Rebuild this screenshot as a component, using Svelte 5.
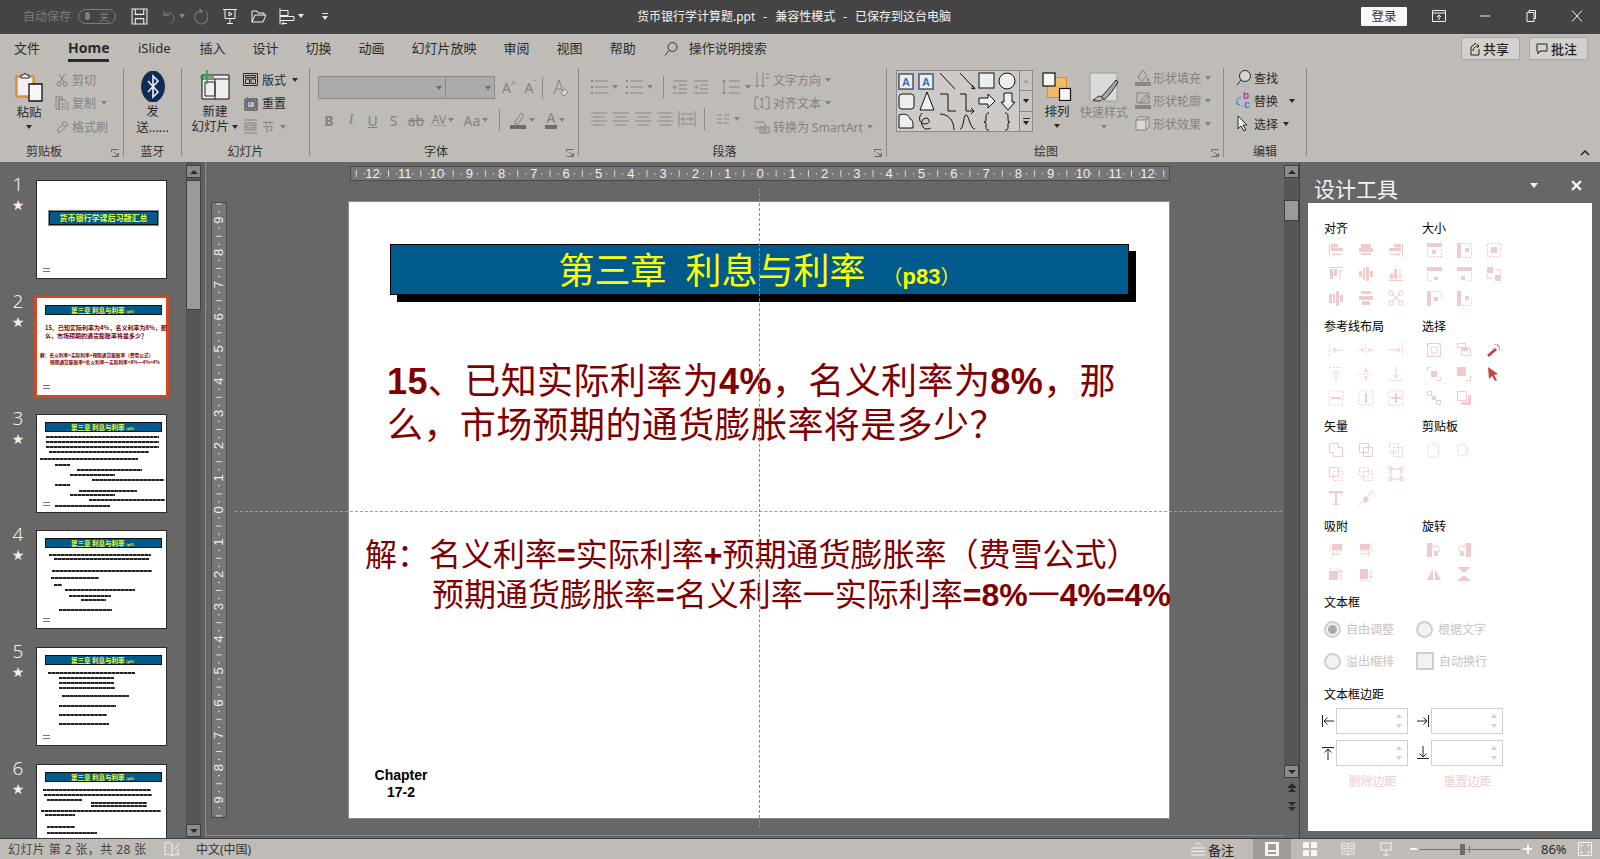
<script>
  const tabs = ['文件', 'Home', 'iSlide', '插入', '设计', '切换', '动画', '幻灯片放映', '审阅', '视图', '帮助'];
  const hTicks = [], vTicks = [];
  for (let q = -50; q <= 50; q++) {
    if (q % 4 === 0) continue;
    hTicks.push({ p: 409 + q * 8.075, big: q % 2 === 0 });
    if (Math.abs(q) <= 38) vTicks.push({ p: 307 + q * 8.05, big: q % 2 === 0 });
  }
  const hNums = Array.from({ length: 25 }, (_, i) => i - 12);
  const vNums = Array.from({ length: 19 }, (_, i) => i - 9);

  const thumbs = [
    { n: 1, title: '货币银行学课后习题汇总', kind: 'cover', lines: [] },
    { n: 2, title: '第三章 利息与利率', kind: 'cur', lines: [] },
    { n: 3, title: '第三章 利息与利率', kind: 'lines', lines: [
      [9, 113, 4], [9, 113, 3], [9, 113, 3], [12, 100, 3], [3, 98, 5], [18, 15, 4], [40, 65, 3], [33, 45, 3], [55, 72, 3],
      [18, 15, 3], [42, 58, 4], [33, 45, 2], [52, 76, 3], [18, 55, 4] ] },
    { n: 4, title: '第三章 利息与利率', kind: 'lines', lines: [
      [12, 102, 6], [17, 95, 2], [15, 100, 10], [14, 48, 5], [17, 8, 5], [28, 70, 3], [32, 42, 4], [44, 25, 2], [22, 53, 8] ] },
    { n: 5, title: '第三章 利息与利率', kind: 'lines', lines: [
      [11, 87, 7], [22, 55, 3], [22, 55, 3], [22, 56, 3], [25, 67, 6], [22, 57, 8], [22, 48, 7], [22, 50, 7] ] },
    { n: 6, title: '第三章 利息与利率', kind: 'lines', lines: [
      [6, 108, 7], [7, 108, 3], [10, 35, 3], [54, 56, 1], [54, 56, 1], [4, 120, 3], [8, 30, 2], [10, 28, 10], [10, 50, 4] ] }
  ];

  const P = {
    a1: { s: 'M1.5 1v14M14 12.5H4M6.5 10.5l-2 2 2 2', f: 'M3 2h7v3.5H3zM3 6h12v3H3z' },
    a2: { f: 'M3 2h10v4H3zM1 6h14v4H1zM3 11h10v2H3z' },
    a3: { s: 'M14.5 1v14M2 12.5h10M9.5 10.5l2 2-2 2', f: 'M6 2h7v3.5H6zM1 6h12v3H1z' },
    a4: { s: 'M1 1.5h14M12 14V4M10 6l2-2 2 2', f: 'M2 3h3v10H2zM6 3h3v7H6z' },
    a5: { f: 'M1 5h3v6H1zM5 2h2v12H5zM8 1h3v14H8zM12 5h3v6h-3z' },
    a6: { s: 'M1 14.5h14M12 3v9M10 10l2 2 2-2', f: 'M2 8h3v5H2zM6 3h3v10H6z' },
    a7: { f: 'M1 4h3v9H1zM5 4h2v9H5zM8 1h3v15H8zM12 5h3v7h-3z' },
    a8: { f: 'M3 1h10v3H3zM1 6h14v4H1zM4 11h8v4H4z' },
    a9: { s: 'M4 4l8 8M12 4l-8 8M1 1h4v4H1zM11 1h4v4h-4zM1 11h4v4H1zM11 11h4v4h-4z' },
    b1: { f: 'M1 1h15v4H1zM6 8h4v4H6z', d: 'M1.5 6v8.5h14V6' },
    b2: { f: 'M1 1h4v15H1zM9 6h4v4H9z', d: 'M6 1.5h9.5v14H6' },
    b3: { d: 'M1.5 1.5h13v13h-13z', f: 'M5 5h6v6H5z' },
    b4: { f: 'M1 1h15v4H1zM8 11h4v3H8z', d: 'M1.5 6v8.5h5' },
    b5: { f: 'M1 1h15v4H1zM5 10h4v4H5z', d: 'M15.5 6v8.5h-4' },
    b6: { f: 'M1 1h6v6H1zM9 9h6v6H9z', s: 'M10 4h5v4M6 12H1V8' },
    b7: { f: 'M1 1h4v15H1zM8 7h4v4H8z', d: 'M7 1.5h8.5v8' },
    b8: { f: 'M1 1h4v15H1zM9 6h4v4H9z', d: 'M6 15.5h9.5V9' },
    c1: { d: 'M1.5 1v14', s: 'M15 8H5M8 5.5 5 8l3 2.5' },
    c2: { d: 'M8 1v14', s: 'M1 8h5M4 6l2 2-2 2M15 8h-5M12 6l-2 2 2 2' },
    c3: { d: 'M14.5 1v14', s: 'M1 8h11M9 5.5 12 8l-3 2.5' },
    c4: { d: 'M1 1.5h14', s: 'M8 15V5M5.5 8 8 5l2.5 3' },
    c5: { d: 'M1 8h14', s: 'M8 1v5M6 4l2 2 2-2M8 15v-5M6 12l2-2 2 2' },
    c6: { d: 'M1 14.5h14', s: 'M8 1v11M5.5 9 8 12l2.5-3' },
    c7: { d: 'M1 1h14v14H1z', f: 'M3 7h10v2H3z' },
    c8: { d: 'M1 1h14v14H1z', f: 'M7 3h2v10H7z' },
    c9: { d: 'M1 1h14v14H1z', f: 'M7 3h2v10H7zM3 7h10v2H3z' },
    d1: { s: 'M1.5 1.5h9v4h4v9h-9v-4h-4z' },
    d2: { s: 'M1.5 1.5h9v9h-9zM5.5 5.5h9v9h-9z' },
    d3: { d: 'M1.5 1.5h9v9h-9zM5.5 5.5h9v9h-9z' },
    d4: { s: 'M1.5 1.5h9v9h-9z', d: 'M5.5 5.5h9v9h-9z' },
    d5: { d: 'M1.5 1.5h9v9h-9zM5.5 5.5h9v9h-9z' },
    d6: { s: 'M3 3h10v10H3zM1 1h3v3H1zM12 1h3v3h-3zM1 12h3v3H1zM12 12h3v3h-3z' },
    d7: { f: 'M1 1h14v3h-1l-1-1H9v10l2 1v1H5v-1l2-1V3H3L2 4H1z' },
    d8: { s: 'M1 15l5-5M10 6l5-5', f: 'M5 8l3-2 3 2-1 3-3 2-2-2z' },
    e1: { d: 'M2 1v8h12', f: 'M4 2h10v6H4z', s: 'M13 12H4M6 10l-2 2 2 2' },
    e2: { d: 'M14 1v8H2', f: 'M2 2h10v6H2z', s: 'M2 12h10M10 10l2 2-2 2' },
    e3: { d: 'M2 3h9v4', f: 'M1 5h9v9H1z', s: 'M13 14V4M11 6l2-2 2 2' },
    e4: { d: 'M2 15h12', f: 'M2 3h8v10H2z', s: 'M13 3v9M11 10l2 2 2-2' },
    h1: { f: 'M1 1h5v14H1zM8 9h4v5H8z', s: 'M8 6c0-3 5-3 5 1v3M8 2 6 4l2 2' },
    h2: { f: 'M10 1h5v14h-5zM4 9h4v5H4z', s: 'M8 6c0-3-5-3-5 1v3M8 2l2 2-2 2' },
    h3: { f: 'M7 3v11H1zM9 3v11h6z' },
    h4: { f: 'M2 1h12v1L8 7 2 2zM8 9l6 5v1H2v-1z' },
    k1: { s: 'M1.5 1.5h13v13h-13zM5 5h6v6H5z', f: 'M1 1h2v2H1zM13 1h2v2h-2zM1 13h2v2H1zM13 13h2v2h-2z' },
    k2: { s: 'M1.5 1.5h8v3M5.5 6.5h9v7h-9zM1.5 1.5v4h4', f: 'M6 5h6v4H6z' },
    k4: { s: 'M1.5 5V1.5H5M14.5 11v3.5H11', f: 'M5 5h6v6H5z' },
    k5: { s: 'M10 14.5h4.5V10', f: 'M1 1h9v9H1z' },
    k7: { s: 'M1.5 1.5h4v4h-4zM10.5 10.5h4v4h-4z', f: 'M6 6h4v4H6z' },
    k8: { s: 'M1.5 1.5h9v9h-9z', f: 'M12 5h3v10H5v-3h7z' },
    m1: { s: 'M4 3h6a2 2 0 0 1 2 2v8a2 2 0 0 1-2 2H4a2 2 0 0 1-2-2V5a2 2 0 0 1 2-2zM6 1h4a3 3 0 0 1 3 3v8' },
    m2: { s: 'M2 3h6l2 2v8H2zM6 1h2l4 4v8' }
  };
  const S1 = [['a1','a2','a3'],['a4','a5','a6'],['a7','a8','a9']];
  const S2 = [['b1','b2','b3'],['b4','b5','b6'],['b7','b8']];
  const S3 = [['c1','c2','c3'],['c4','c5','c6'],['c7','c8','c9']];
  const S4 = [['k1','k2','wand'],['k4','k5','cursor'],['k7','k8']];
  const S5 = [['d1','d2','d3'],['d4','d5','d6'],['d7','d8']];
  const S6 = [['m1','m2']];
  const S7 = [['e1','e2'],['e3','e4']];
  const S8 = [['h1','h2'],['h3','h4']];
  const sections = [
    ['对齐', S1, '大小', S2], ['参考线布局', S3, '选择', S4], ['矢量', S5, '剪贴板', S6], ['吸附', S7, '旋转', S8]
  ];
</script>

{#snippet pic(name)}
  <svg class="pi" class:soft={name === 'm1' || name === 'm2'} viewBox="0 0 16 16" width="16" height="16">
    {#if name === 'wand'}
      <path class="rf" d="M1 13l8-7 2 2-8 7z" /><path class="rs" d="M11 2l1 2M14 5l-2 0M9 2v1M14 8l-1-1" />
    {:else if name === 'cursor'}
      <path class="rf" d="M2 1l10 7-4 1 3 5-2 1-3-5-3 3z" />
    {:else}
      {#if P[name].f}<path class="ff" d={P[name].f} />{/if}
      {#if P[name].s}<path class="ss" d={P[name].s} />{/if}
      {#if P[name].d}<path class="dd" d={P[name].d} />{/if}
    {/if}
  </svg>
{/snippet}

{#snippet pgrid(rows)}
  <div class="pgrid">
    {#each rows as r}
      <div class="prow">{#each r as n}<span class="pcell">{@render pic(n)}</span>{/each}</div>
    {/each}
  </div>
{/snippet}

{#snippet spin(dir)}
  <div class="marg-item">
    <svg class="marg-ic" viewBox="0 0 14 14" width="14" height="14">
      {#if dir === 'l'}<path d="M1.5 1v12M13 7H3M6.5 3.5 3 7l3.5 3.5" />
      {:else if dir === 'r'}<path d="M12.5 1v12M1 7h10M7.5 3.5 11 7l-3.5 3.5" />
      {:else if dir === 't'}<path d="M1 1.5h12M7 14V3M3.5 6.5 7 3l3.5 3.5" />
      {:else}<path d="M1 12.5h12M7 0v11M3.5 7.5 7 11l3.5-3.5" />{/if}
    </svg>
    <div class="spin"><i class="sup"></i><i class="sdn"></i></div>
  </div>
{/snippet}

{#snippet launcher()}
  <svg class="lau" viewBox="0 0 8 8" width="8" height="8"><path d="M.5 3V.5H7.500M.5 7.500h7V4M3 3l4 4M7 4.500V7H4.500" /></svg>
{/snippet}

<div class="app">
  <header class="titlebar">
    <div class="tb-left">
      <span class="autosave">自动保存</span>
      <span class="toggle"><i></i><b>关</b></span>
      <svg class="qa save" viewBox="0 0 16 16" width="17" height="17"><path d="M1 1h14v14H1zM4 1v5h8V1M4 15v-5h8v5" /></svg>
      <svg class="qa dim undo" viewBox="0 0 16 16" width="16" height="17"><path d="M3 2v5h5M3 7c3-4 10-3 10 3 0 2-1 4-3 5" /></svg>
      <i class="car dimc"></i>
      <svg class="qa dim redo" viewBox="0 0 16 16" width="17" height="17"><path d="M6 1l3 2-3 2M9 3C4 2 1 6 2 10c1 3 3 5 6 5s6-3 6-7c0-2-1-4-2-5" /></svg>
      <svg class="qa pres" viewBox="0 0 16 16" width="16" height="17"><path d="M1 1h14M3 1v9h10V1M8 10v5M5 15h6M7 3.500v4l3-2z" /></svg>
      <svg class="qa open" viewBox="0 0 16 16" width="16" height="16"><path d="M1 3h5l1 2h6v2M1 14V3M1 14h11l3-7H4z" /></svg>
      <svg class="qa alignq" viewBox="0 0 16 16" width="16" height="17"><path d="M1 0v16M1 2h8v5H1M1 8h14v4H1M8 15H3M5 13l-2 2 2 2" /></svg>
      <i class="car whitec"></i>
      <span class="more"><i></i><i class="car whitec"></i></span>
    </div>
    <div class="doc">货币银行学计算题.ppt<span class="dash">-</span>兼容性模式<span class="dash">-</span>已保存到这台电脑</div>
    <div class="tb-right">
      <button class="login">登录</button>
      <svg class="win" viewBox="0 0 14 14" width="14" height="14"><path d="M.5 1.500h13v11H.5zM.5 4h13M7 11V6M5 8l2-2 2 2" /></svg>
      <svg class="win" viewBox="0 0 14 14" width="14" height="14"><path d="M2 7h10" /></svg>
      <svg class="win" viewBox="0 0 14 14" width="14" height="14"><path d="M3 3.500h7v9H3zM5 3.500V1.500h6.500v8H10" /></svg>
      <svg class="win" viewBox="0 0 14 14" width="14" height="14"><path d="M2 1.500l10 11M12 1.500l-10 11" /></svg>
    </div>
  </header>

  <nav class="tabs">
    {#each tabs as t}<span class="tab" class:active={t === 'Home'}>{t}</span>{/each}
    <svg class="searchic" viewBox="0 0 14 14" width="14" height="15"><circle cx="8.500" cy="5.500" r="4.500" /><path d="M5 9 1 14" /></svg>
    <span class="tell">操作说明搜索</span>
    <div class="share">
      <button><svg viewBox="0 0 12 14" width="12" height="14"><path d="M8 1 3 5v8h8V7M5 9c0-3 2-5 6-5M9 2l2 2-2 2" /></svg>共享</button>
      <button><svg viewBox="0 0 12 14" width="12" height="14"><path d="M1 2h10v7H4l-2 3V9H1z" /></svg>批注</button>
    </div>
  </nav>

  <section class="ribbon">
    <div class="rg g-clip">
      <div class="rb">
        <div class="big">
          <svg viewBox="0 0 28 30" width="28" height="30">
            <path d="M1 4h18v21H1z" fill="#eba95c" stroke="#c87a2a" />
            <path d="M3 6h14v17H3z" fill="#f2f0ee" stroke="none" />
            <path d="M6 5V3h2.500L10 1l1.500 2H14v3H6z" fill="#f4f2f0" stroke="#222" />
            <path d="M14 12h13v17H14z" fill="#f7f6f5" stroke="#111" stroke-width="1.300" />
          </svg>
          <span class="bl on">粘贴</span><i class="car"></i>
        </div>
        <div class="list off">
          <div class="li"><svg viewBox="0 0 14 14" width="14" height="14"><path d="M4 1l5 8M10 1 5 9" /><circle cx="4" cy="11" r="2" /><circle cx="10" cy="11" r="2" /></svg>剪切</div>
          <div class="li"><svg viewBox="0 0 14 14" width="14" height="14"><path d="M1 1h6l1 2H4v10H1zM4 4h6l3 3v7H4zM6 8h5M6 11h5" /></svg>复制<i class="car gap"></i></div>
          <div class="li"><svg viewBox="0 0 14 14" width="14" height="14"><path d="M9 1l4 4-3 2-3-3zM7 5l-5 5 2 3 6-5" /></svg>格式刷</div>
        </div>
      </div>
      <div class="gl">剪贴板{@render launcher()}</div>
    </div>

    <div class="rg g-bt">
      <div class="rb col">
        <svg class="bt" viewBox="0 0 24 31" width="24" height="31"><ellipse cx="12" cy="15.500" rx="11.500" ry="15.500" fill="#0c2d5c" /><path d="M7 10l10 11-5 5V5l5 5L7 21" fill="none" stroke="#e8e8e8" stroke-width="1.700" /></svg>
        <span class="bl on btl">发</span><span class="bl on">送......</span>
      </div>
      <div class="gl">蓝牙</div>
    </div>

    <div class="rg g-slide">
      <div class="rb">
        <div class="big wide">
          <svg viewBox="0 0 32 30" width="32" height="30">
            <path d="M3 5h27v24H3z" fill="#f0eeec" stroke="#111" />
            <path d="M3 9h27M16 9v20M6 12h10v14H6z" fill="none" stroke="#222" />
            <path d="M8 0v14M1 7h14" stroke="#2fa04d" stroke-width="1.600" fill="none" />
          </svg>
          <span class="bl on">新建</span>
          <span class="bl on">幻灯片 <i class="car inl"></i></span>
        </div>
        <div class="list on2">
          <div class="li"><svg viewBox="0 0 15 15" width="15" height="15"><path d="M.5 1.500h14v12H.5zM2.500 3.500h10v2h-10zM2.500 7h4v4.500h-4zM8 7h4.500v4.500H8z" /></svg>版式 <i class="car"></i></div>
          <div class="li"><svg viewBox="0 0 15 15" width="15" height="15"><path d="M2 3h12v11H2z" /><path d="M4 5h8v7H4z" /><path class="blue" d="M5 1 2 4l3 3M2 4h5v5" /></svg>重置</div>
          <div class="li off2"><svg viewBox="0 0 15 15" width="15" height="15"><path d="M1 1h13M1 14h13M2 4h11v7H2zM4 6h7v3H4z" /></svg>节 <i class="car"></i></div>
        </div>
      </div>
      <div class="gl">幻灯片</div>
    </div>

    <div class="rg g-font">
      <div class="rb col2">
        <div class="frow r1">
          <div class="combo w1"><i class="car"></i></div><div class="combo w2"><i class="car"></i></div>
          <span class="ft aa">A<sup>^</sup></span><span class="ft ab">A<sup>ˇ</sup></span>
          <span class="vsep h20"></span>
          <svg class="clear" viewBox="0 0 18 20" width="18" height="20"><path d="M4 16 9 2l5 14M6 11h6" /><path d="m11 15 4-4 3 3-4 4z" fill="#d8d6d4" /></svg>
        </div>
        <div class="frow r2">
          <span class="fb c22 b">B</span><span class="fb c22 it">I</span><span class="fb c21 ul">U</span><span class="fb c21 bl2">S</span>
          <span class="fb c24 strike">ab</span>
          <span class="fb c30 av"><em>AV</em><i class="car"></i></span>
          <span class="fb c36">Aa <i class="car"></i></span>
          <span class="vsep h20"></span>
          <span class="fb c30 pen"><svg viewBox="0 0 16 18" width="16" height="18"><path d="m5 11 6-9 3 2-6 9H5z" /><rect x="0" y="14" width="16" height="4" fill="#6f6d6b" stroke="none" /></svg><i class="car"></i></span>
          <span class="fb c36 cola"><span class="und">A</span><i class="car"></i></span>
        </div>
      </div>
      <div class="gl">字体{@render launcher()}</div>
    </div>

    <div class="rg g-para">
      <div class="rb">
        <div class="pleft">
          <div class="frow pr1">
            <svg class="pg" viewBox="0 0 18 18" width="18" height="18"><path d="M5 3h13M5 9h13M5 15h13" /><path class="d" d="M1 2h2v2H1zM1 8h2v2H1zM1 14h2v2H1z" /></svg><i class="car"></i>
            <svg class="pg ml" viewBox="0 0 18 18" width="18" height="18"><path d="M5 3h13M5 9h13M5 15h13" /><path class="d" d="M1 2h2v2H1zM1 8h2v2H1zM1 14h2v2H1z" /></svg><i class="car"></i>
            <span class="vsep h20 m8"></span>
            <svg class="pg" viewBox="0 0 16 18" width="16" height="18"><path d="M1 3h14M7 7h8M7 11h8M1 15h14M5 9H1m2-2-2 2 2 2" /></svg>
            <svg class="pg ml5" viewBox="0 0 16 18" width="16" height="18"><path d="M1 3h14M7 7h8M7 11h8M1 15h14M1 9h4M3 7l2 2-2 2" /></svg>
            <svg class="pg ml12" viewBox="0 0 20 18" width="20" height="18"><path d="M8 3h11M8 9h11M8 15h11M3 2v14M1 4l2-2 2 2M1 14l2 2 2-2" /></svg><i class="car"></i>
          </div>
          <div class="frow pr2">
            {#each [0, 1, 2, 3] as k}<svg class="pg al" viewBox="0 0 18 16" width="18" height="16"><path d="M1 2h16M3 6h12M1 10h16M3 14h12" /></svg>{/each}
            <svg class="pg al" viewBox="0 0 18 18" width="18" height="18"><path d="M1 1v16M17 1v16M3 4h12M3 14h12M3 9h12M6 7 3 9l3 2M12 7l3 2-3 2" /></svg>
            <span class="vsep h20 m4"></span>
            <svg class="pg ml5" viewBox="0 0 14 14" width="14" height="14"><path d="M1 3h5M1 7h5M1 11h5M8 3h5M8 7h5M8 11h5" /></svg><i class="car"></i>
          </div>
        </div>
        <div class="list off pright">
          <div class="li"><svg viewBox="0 0 16 16" width="16" height="16"><path d="M3 1v14M1 13l2 2 2-2M9 1v14M7 13l2 2 2-2M12 2h3M12 6h3" /></svg>文字方向<i class="car"></i></div>
          <div class="li"><svg viewBox="0 0 16 16" width="16" height="16"><path d="M1 2v12M15 2v12M1 2h4M11 2h4M1 14h4M11 14h4M8 3v10M6 5l2-2 2 2M6 11l2 2 2-2" /></svg>对齐文本<i class="car"></i></div>
          <div class="li"><svg viewBox="0 0 16 16" width="16" height="16"><path d="M1 3h8l3 3-3 3H1M6 8h9v6H6zM8 10h5M8 12h5" /></svg>转换为 SmartArt<i class="car"></i></div>
        </div>
      </div>
      <div class="gl">段落{@render launcher()}</div>
    </div>

    <div class="rg g-draw">
      <div class="rb">
        <div class="gallery">
          <svg class="shapes" viewBox="0 0 122 60" width="122" height="60">
            <g class="s">
              <rect x="2" y="3" width="14" height="15" />
              <text x="9" y="15" class="gt">A</text>
              <rect x="22" y="3" width="14" height="15" />
              <text x="29" y="15" class="gt">A</text>
              <path class="nf" d="M43 2l15 16M63 2l15 16M75 14l3 4-4-1" />
              <rect x="82" y="2" width="15" height="15" />
              <circle cx="110" cy="10" r="8" />
              <rect x="2" y="23" width="15" height="15" rx="3" />
              <path d="M30 21l7 18H23z" />
              <path class="nf" d="M43 23h8v17h8M63 23h6v17h8M74 37l3 3-3 3" />
              <path d="M82 27h9v-4l7 7-7 7v-4h-9zM107 22h8v9h3l-7 8-7-8h3z" />
              <path d="M2 44c7-2 10 0 11 4 3 1 3 3 3 9H2z" />
              <path class="nf" d="M25 42c-4 4-3 10 2 11 5 0 7-3 3-6-6 0-6 6-4 9s6 2 8 1" />
              <path class="nf" d="M43 43c7 0 14 5 14 16M63 58c4 0 3-14 6-14s4 14 9 14" />
              <path class="nf" d="M92 42c-3 0-3 2-3 5s0 4-2 4c2 0 2 1 2 4s0 4 3 4M108 42c3 0 3 2 3 5s0 4 2 4c-2 0-2 1-2 4s0 4-3 4" />
            </g>
            <g class="hand">
              <path d="M1 2h2v2H1zM15 2h2v2h-2zM1 17h2v2H1zM15 17h2v2h-2zM21 2h2v2h-2zM35 2h2v2h-2zM21 17h2v2h-2zM35 17h2v2h-2z" />
            </g>
          </svg>
          <div class="gscroll">
            <span><i class="up"></i></span><span><i class="dn"></i></span><span class="exp"><b></b><i class="dn"></i></span>
          </div>
        </div>
        <div class="big arrange">
          <svg viewBox="0 0 30 29" width="30" height="29">
            <rect x="5.500" y="5.500" width="19" height="20" fill="#efbb68" stroke="#de8a34" />
            <rect x="1" y="1" width="12" height="13" fill="#f7f6f5" stroke="#111" stroke-width="1.200" />
            <rect x="17.500" y="16.500" width="11" height="12" fill="#f7f6f5" stroke="#111" stroke-width="1.200" />
          </svg>
          <span class="bl on">排列</span><i class="car"></i>
        </div>
        <div class="big quick">
          <svg viewBox="0 0 30 30" width="30" height="30">
            <rect x="1" y="1" width="27" height="28" rx="1" fill="#dcdad8" stroke="#9c9a98" />
            <path d="M27 8C22 14 17 20 12 25l3 3c5-4 10-11 14-18z" fill="#a9a7a5" />
            <path d="M11 24c-3 0-4 3-7 4 4 2 9 1 10-2z" fill="#bfbdbb" />
          </svg>
          <span class="bl dimt">快速样式</span><i class="car dimi"></i>
        </div>
        <div class="list off fills">
          <div class="li"><svg viewBox="0 0 16 18" width="16" height="18"><path d="M8 1 3 8l4 4 5-5zM13 9c1 1 1 3 0 3s-1-2 0-3" /><rect x="0" y="13" width="16" height="4" fill="#8a8785" stroke="none" /></svg>形状填充<i class="car"></i></div>
          <div class="li"><svg viewBox="0 0 16 18" width="16" height="18"><path d="M2 1h12v10H2zM5 10l6-7 2 2-6 6H5z" /><rect x="0" y="13" width="16" height="4" fill="#8a8785" stroke="none" /></svg>形状轮廓<i class="car"></i></div>
          <div class="li"><svg viewBox="0 0 16 18" width="16" height="18"><path d="M1 5h10l3-3v10l-3 3H1zM1 5l3-3h10M11 5v10" fill="#dad8d6" /></svg>形状效果<i class="car"></i></div>
        </div>
      </div>
      <div class="gl">绘图{@render launcher()}</div>
    </div>

    <div class="rg g-edit">
      <div class="rb">
        <div class="list on3">
          <div class="li"><svg viewBox="0 0 16 18" width="16" height="18"><circle cx="10" cy="7" r="5.500" fill="#d8d6d4" /><path d="M6 11l-4 5" /></svg>查找</div>
          <div class="li"><svg viewBox="0 0 16 18" width="16" height="18"><path class="blue" d="M6 5C2 6 1 9 2 12l2-2M2 12l3 1M8 14h-1" /><text x="8" y="7" class="pb">b</text><text x="9" y="16" class="cb">c</text></svg>替换 <i class="car sp"></i></div>
          <div class="li"><svg viewBox="0 0 16 18" width="16" height="18"><path d="M3 1v13l3-3 3 5 2-1-3-5h4z" fill="#eee" /></svg>选择 <i class="car"></i></div>
        </div>
      </div>
      <div class="gl">编辑</div>
    </div>
    <svg class="collapse" viewBox="0 0 10 6" width="10" height="6"><path d="M1 5l4-4 4 4" /></svg>
  </section>

  <div class="work">
    <aside class="slides">
      <div class="thumbs">
        {#each thumbs as t}
          <div class="trow">
            <div class="tnum"><span>{t.n}</span><b>★</b></div>
            <div class="thumb" class:cur={t.kind === 'cur'}>
              {#if t.kind === 'cover'}
                <div class="ttitle cover">{t.title}</div>
              {:else}
                <div class="ttitle">{t.title}<small>（p83）</small></div>
              {/if}
              {#if t.kind === 'cur'}
                <div class="t2a">15、已知实际利率为4%，名义利率为8%，那<br />么，市场预期的通货膨胀率将是多少？</div>
                <div class="t2b">解：名义利率=实际利率+预期通货膨胀率（费雪公式）<br /><span>预期通货膨胀率=名义利率一实际利率=8%一4%=4%</span></div>
              {/if}
              {#each t.lines as l}
                <div class="tl" style:margin-left="{l[0]}px" style:width="{l[1]}px" style:margin-top="{l[2]}px"></div>
              {/each}
              {#if t.kind !== 'lines' || t.n < 6}<div class="tfoot"><i></i><i></i></div>{/if}
            </div>
          </div>
        {/each}
      </div>
      <div class="vscroll left">
        <span class="sb"><i class="up"></i></span>
        <span class="thumbbar"></span>
        <span class="sb bottom"><i class="dn"></i></span>
      </div>
      <div class="sliver"></div>
    </aside>

    <main class="edit">
      <svg class="hruler" viewBox="0 0 818 13" width="818" height="13">
        {#each hTicks as t}
          {#if t.big}<path class="tk" d="M{t.p} 3v7" />{:else}<path class="tk" d="M{t.p} 6v1.500" />{/if}
        {/each}
        {#each hNums as n}<text class="rn" x={409 + n * 32.3} y="11">{Math.abs(n)}</text>{/each}
      </svg>
      <svg class="vruler" viewBox="0 0 14 614" width="14" height="614">
        {#each vTicks as t}
          {#if t.big}<path class="tk" d="M4 {t.p}h6" />{:else}<path class="tk" d="M6 {t.p}h2" />{/if}
        {/each}
        {#each vNums as n}<text class="rn" transform="translate(11 {307 + n * 32.2}) rotate(-90)">{Math.abs(n)}</text>{/each}
      </svg>

      <article class="slide">
        <div class="stitle">第三章<span class="sgap"></span>利息与利率<span class="sgap2"></span><span class="sp83">（<b>p83</b>）</span></div>
        <div class="q">
          <div><b>15</b>、已知实际利率为<b>4%</b>，名义利率为<b>8%</b>，那</div>
          <div>么，市场预期的通货膨胀率将是多少？</div>
        </div>
        <div class="a">
          <div>解：名义利率<b>=</b>实际利率<b>+</b>预期通货膨胀率（费雪公式）</div>
          <div class="a2">预期通货膨胀率<b>=</b>名义利率一实际利率<b>=8%</b>一<b>4%=4%</b></div>
        </div>
        <div class="chapter">Chapter<br />17-2</div>
      </article>

      <div class="gh"></div>
      <div class="gv"></div>
    </main>

    <div class="vscroll right">
      <span class="sb"><i class="up"></i></span>
      <span class="trackgap"></span>
      <span class="thumbbar small"></span>
      <span class="trackfill"></span>
      <span class="sb"><i class="dn"></i></span>
      <div class="pager">
        <svg viewBox="0 0 10 10" width="10" height="10"><path d="M5 0l4 4H1zM5 5l4 4H1z" /><path d="M1 4.500h8" /></svg>
        <svg viewBox="0 0 10 10" width="10" height="10"><path d="M1 1h8L5 5zM1 6h8l-4 4z" /></svg>
      </div>
    </div>

    <aside class="panel">
      <div class="phead">
        <span>设计工具</span>
        <i class="ptri"></i>
        <svg class="px" viewBox="0 0 10 10" width="11" height="11"><path d="M1 1l8 8M9 1l-8 8" /></svg>
      </div>
      <div class="pbody">
        {#each sections as s}
          <div class="psec">
            <div class="pcol c1"><h4>{s[0]}</h4>{@render pgrid(s[1])}</div>
            <div class="pcol"><h4>{s[2]}</h4>{@render pgrid(s[3])}</div>
          </div>
        {/each}
        <h4 class="tbx">文本框</h4>
        <div class="opts">
          <label class="opt c1o"><i class="radio sel"></i>自由调整</label>
          <label class="opt"><i class="radio"></i>根据文字</label>
          <label class="opt c1o"><i class="radio"></i>溢出缩排</label>
          <label class="opt"><i class="check"></i>自动换行</label>
        </div>
        <h4 class="mg">文本框边距</h4>
        <div class="margins">
          {@render spin('l')}{@render spin('r')}{@render spin('t')}{@render spin('b')}
        </div>
        <div class="actions"><span>删除边距</span><span>重置边距</span></div>
      </div>
    </aside>
  </div>

  <footer class="status">
    <span class="st1">幻灯片 第 2 张，共 28 张</span>
    <svg class="stn" viewBox="0 0 16 16" width="16" height="16"><path d="M8 3C6 1 3 1 1 2v12c2-1 5-1 7 1 2-2 4-2 6-1V8M8 3v12M11 8l4-6" /></svg>
    <span class="st2">中文(中国)</span>
    <svg class="stnote" viewBox="0 0 16 14" width="16" height="14"><path d="M1 6h14M1 9.500h14M1 13h14M5 3.500l3-3 3 3" /></svg>
    <span class="st3">备注</span>
    <span class="vb act"><svg viewBox="0 0 14 14" width="14" height="14"><path d="M0 0h14v14H0z" fill="#f7f6f5" stroke="none" /><path d="M3 2h8v6H3zM3 10h8v2H3z" fill="#a09c98" stroke="none" /></svg></span>
    <span class="vb"><svg viewBox="0 0 14 14" width="14" height="14"><path d="M0 0h6v6H0zM8 0h6v6H8zM0 8h6v6H0zM8 8h6v6H8z" fill="#f7f6f5" stroke="none" /></svg></span>
    <span class="vb"><svg class="lv" viewBox="0 0 14 14" width="14" height="14"><path d="M7 2C5 1 3 1 1 1v11c2 0 4 0 6 1 2-1 4-1 6-1V1c-2 0-4 0-6 1zM7 2v11M2.500 4h3M2.500 6.500h3M2.500 9h3M8.500 4h3M8.500 6.500h3M8.500 9h3" /></svg></span>
    <span class="vb"><svg class="lv" viewBox="0 0 14 14" width="14" height="14"><path d="M1 1h12M2 1v7h10V1M7 8v5M4 13h6" /></svg></span>
    <div class="zoom">
      <b class="zm"></b>
      <div class="slider"><i class="sthumb"></i><i class="smid"></i></div>
      <b class="zp"></b>
      <span class="zv">86%</span>
      <svg class="fit" viewBox="0 0 14 14" width="14" height="14"><path d="M.5.5h13v13H.5zM3 5V3h2M9 3h2v2M3 9v2h2M11 9v2H9" /></svg>
    </div>
  </footer>
</div>

<style>
  :global(body) { margin: 0; background: #676767; overflow: hidden; }
  .app {
    width: 1600px; height: 859px; display: flex; flex-direction: column; overflow: hidden;
    font-family: "Noto Sans", "Noto Sans CJK SC", sans-serif; font-size: 12px; color: #2a2a2a; background: #676767;
  }
  svg { fill: none; stroke: currentColor; stroke-width: 1; flex: none; display: block; }
  i { font-style: normal; }
  button { font-family: inherit; }

  .car { display: inline-block; width: 0; height: 0; border: 3px solid transparent; border-top: 4px solid currentColor; border-bottom: 0; vertical-align: middle; }
  .whitec { color: #e6e6e6; }
  .dimc { color: #8a8a8a; }

  /* title bar */
  .titlebar { height: 34px; background: #444; display: flex; align-items: center; color: #f2f2f2; flex: none; padding-bottom: 2px; box-sizing: border-box; }
  .tb-left { width: 637px; display: flex; align-items: center; padding-left: 23px; box-sizing: border-box; flex: none; }
  .autosave { color: #7d7d7d; font-size: 12px; width: 55px; }
  .toggle { width: 38px; height: 15px; border: 1px solid #7d7d7d; border-radius: 9px; display: flex; align-items: center; justify-content: space-between; padding: 0 6px; box-sizing: border-box; color: #7d7d7d; font-size: 10px; }
  .toggle i { width: 5px; height: 8px; background: #7d7d7d; border-radius: 3px; }
  .toggle b { font-weight: 400; }
  .qa { color: #f2f2f2; }
  .qa.dim { color: #7d7d7d; }
  .save { margin-left: 15px; }
  .undo { margin-left: 13px; margin-right: 2px; }
  .redo { margin-left: 8px; }
  .pres { margin-left: 12px; }
  .open { margin-left: 13px; }
  .alignq { margin-left: 12px; margin-right: 3px; }
  .more { margin-left: 18px; display: flex; flex-direction: column; align-items: center; gap: 2px; }
  .more > i:first-child { width: 6px; height: 1px; background: #e6e6e6; }
  .doc { font-size: 12px; white-space: nowrap; color: #f4f4f4; }
  .dash { margin: 0 8px; }
  .tb-right { margin-left: auto; display: flex; align-items: center; height: 32px; }
  .login { width: 46px; height: 19px; background: #f8f8f8; border: 0; border-radius: 1px; padding: 0; font-size: 12.500px; line-height: 19px; color: #333; margin-right: 25px; }
  .win { color: #f0f0f0; margin-right: 32px; }
  .win:last-child { margin-right: 16px; }

  /* tabs */
  .tabs { height: 34px; background: #bfbbb7; display: flex; align-items: flex-start; flex: none; padding-left: 14px; font-size: 13px; box-sizing: border-box; }
  .tab { margin-right: 27px; line-height: 28px; height: 28px; color: #2b2b2b; white-space: nowrap; box-sizing: border-box; }
  .tab.active { font-weight: 700; font-size: 14px; border-bottom: 3px solid #2a2a2a; margin-left: 1px; margin-right: 28.500px; }
  .tab:nth-child(3) { margin-right: 29px; }
  .searchic { color: #333; margin: 7px 11px 0 1px; }
  .tell { color: #333; line-height: 28px; }
  .share { margin-left: auto; margin-right: 12px; margin-top: 3px; display: flex; gap: 9px; }
  .share button { height: 23px; padding: 0 6px; background: #d3d0cd; border: 1px solid #a9a6a3; border-radius: 2px; display: flex; align-items: center; gap: 3px; font-size: 13px; font-weight: 500; color: #222; box-sizing: border-box; width: 59px; }

  /* ribbon */
  .ribbon { height: 94px; background: #bfbbb7; display: flex; flex: none; position: relative; align-items: flex-start; }
  .rg { height: 89px; display: flex; flex-direction: column; border-right: 1px solid #8d8a87; box-sizing: border-box; flex: none; position: relative; }
  .rb { height: 75px; display: flex; }
  .rb.col { flex-direction: column; align-items: center; }
  .rb.col2 { flex-direction: column; }
  .gl { height: 14px; line-height: 18px; text-align: center; color: #333; font-size: 12px; white-space: nowrap; }
  .lau { position: absolute; right: 4px; bottom: 0; color: #6d6b69; }
  .g-clip { width: 124px; padding-left: 8px; }
  .g-bt { width: 58px; }
  .g-slide { width: 128px; padding-left: 7px; }
  .g-font { width: 269px; padding-left: 8px; }
  .g-para { width: 308px; }
  .g-draw { width: 337px; padding-left: 9px; }
  .g-edit { width: 83px; padding-left: 11px; }
  .g-clip .gl { margin-left: -8px; padding-right: 35px; }
  .g-slide .gl { margin-left: -7px; }
  .g-font .gl { margin-left: -8px; padding-right: 16px; }
  .g-para .gl { padding-right: 16px; }
  .g-draw .gl { margin-left: -9px; padding-right: 18px; }
  .g-edit .gl { margin-left: -11px; }

  .big { width: 42px; display: flex; flex-direction: column; align-items: center; padding-top: 4px; }
  .big.wide { width: 52px; padding-top: 2px; }
  .big svg { margin-bottom: 1px; }
  .big .bl { margin-top: 2px; }
  .big.wide svg { margin-bottom: 2px; }
  .big.wide .bl + .bl { margin-top: 0; }
  .big > .car { margin-top: 5px; }
  .bl { line-height: 15px; font-size: 12.500px; white-space: nowrap; }
  .on { color: #2a2a2a; }
  .car.inl { vertical-align: 2px; }
  .bt { margin-top: 3px; }
  .btl { margin-top: 2px; margin-bottom: 1px; }

  .list { display: flex; flex-direction: column; }
  .li { height: 23.500px; display: flex; align-items: center; white-space: nowrap; font-size: 12px; gap: 3px; }
  .list.off { color: #85827f; margin-left: 5px; }
  .list.on2 { color: #2a2a2a; margin-left: 2px; }
  .on2 .li { gap: 4px; }
  .on2 .car { margin-left: -2px; }
  .li.off2 { color: #85827f; }
  .blue { stroke: #3e78c8; }
  .car.gap { margin-left: 7px; }
  .list .car { margin-left: 2px; }

  .frow { display: flex; align-items: center; color: #85827f; }
  .r1 { height: 23px; margin-top: 8px; }
  .r2 { height: 24px; margin-top: 9px; }
  .combo { height: 23px; background: #adaba9; border: 1px solid #8d8a87; box-sizing: border-box; display: flex; align-items: center; justify-content: flex-end; padding-right: 3px; color: #6d6b69; }
  .w1 { width: 128px; }
  .w2 { width: 49px; border-left: 0; }
  .ft { font-size: 14px; line-height: 14px; }
  .ft sup { font-size: 8px; vertical-align: 6px; line-height: 0; }
  .aa { margin-left: 7px; }
  .ab { margin-left: 9px; }
  .vsep { width: 1px; background: #8d8a87; display: block; flex: none; }
  .h20 { height: 22px; margin: 0 7px 0 5px; }
  .clear { color: #85827f; }
  .fb { display: flex; align-items: center; justify-content: center; font-size: 14px; flex: none; gap: 2px; }
  .c22 { width: 22px; } .c21 { width: 21px; } .c24 { width: 24px; } .c30 { width: 30px; } .c36 { width: 36px; }
  .fb.b { font-weight: 700; }
  .fb.it { font-style: italic; font-family: "Liberation Serif", serif; }
  .fb.ul { text-decoration: underline; }
  .fb.strike { text-decoration: line-through; }
  .av em { font-style: normal; font-size: 12px; line-height: 12px; display: block; text-decoration: underline dotted; }
  .cola .und { border-bottom: 4px solid #6f6d6b; line-height: 14px; padding: 0 2px; }
  .pen { gap: 3px; }

  .pleft { width: 171px; padding-left: 11px; box-sizing: border-box; flex: none; }
  .pr1 { height: 22px; margin-top: 8px; }
  .pr2 { height: 22px; margin-top: 10px; gap: 4px; }
  .pg { color: #8a8785; }
  .pg .d { fill: #8a8785; stroke: none; }
  .pr1 .car { margin-left: 4px; }
  .ml { margin-left: 7px; }
  .ml5 { margin-left: 5px; }
  .ml12 { margin-left: 12px; }
  .m8 { margin: 0 8px 0 10px; }
  .m4 { margin: 0 2px 0 4px; }
  .pright { margin-left: 4px !important; }
  .pright .car { margin-left: 1px; }

  .gallery { width: 137px; height: 62px; margin-top: 2px; background: #cdcac7; border: 1px solid #8d8a87; box-sizing: border-box; display: flex; }
  .shapes { color: #111; flex: none; width: 122px; }
  .s { fill: #eee; stroke: #111; }
  .s .nf { fill: none; }
  .hand path { fill: #2d7bd6; stroke: none; }
  .gt { font: 700 11px "Liberation Sans", sans-serif; fill: #2d6fc4; stroke: none; text-anchor: middle; }
  .gscroll { flex: 1; display: flex; flex-direction: column; border-left: 1px solid #8d8a87; background: #c8c5c2; }
  .gscroll span { flex: 1; display: flex; flex-direction: column; align-items: center; justify-content: center; border-bottom: 1px solid #8d8a87; gap: 2px; }
  .gscroll span:last-child { border-bottom: 0; }
  .gscroll b { width: 7px; height: 1px; background: #333; display: block; }
  .gscroll .up { border: 3px solid transparent; border-bottom: 4px solid #a8a5a2; border-top: 0; }
  .gscroll .dn { border: 3px solid transparent; border-top: 4px solid #222; border-bottom: 0; }
  .arrange { width: 30px; margin-left: 9px; padding-top: 4px; }
  .quick { width: 48px; margin-left: 8px; }
  .dimt { color: #85827f; font-size: 12px; }
  .dimi { color: #85827f; }
  .fills { margin-left: 7px !important; margin-top: -2px; }
  .fills .li { gap: 2px; height: 23px; }
  .on3 { color: #2a2a2a; margin-top: -2px; }
  .on3 .li { gap: 3px; height: 23px; }
  .pb { font: 700 10px "Liberation Sans", sans-serif; fill: #a03fa0; stroke: none; }
  .cb { font: 700 10px "Liberation Sans", sans-serif; fill: #3e78c8; stroke: none; }
  .car.sp { margin-left: 8px; }
  .collapse { position: absolute; right: 10px; bottom: 6px; color: #222; stroke-width: 1.500; }

  /* work */
  .work { flex: 1; display: flex; min-height: 0; background: #676767; border-bottom: 1px solid #3d3d3d; }
  .slides { width: 205px; display: flex; flex: none; }
  .thumbs { width: 186px; flex: none; padding-top: 18px; box-sizing: border-box; overflow: hidden; }
  .trow { display: flex; height: 116.800px; }
  .tnum { width: 36px; display: flex; flex-direction: column; align-items: center; color: #efefef; margin-top: -8px; flex: none; }
  .tnum span { font-size: 19px; line-height: 25px; font-weight: 300; }
  .tnum b { font-size: 14px; line-height: 16px; font-weight: 400; font-family: "DejaVu Sans", sans-serif; }
  .thumb { width: 131px; height: 99px; background: #fff; border: 1px solid #2b2b2b; box-sizing: border-box; flex: none; overflow: hidden; position: relative; padding-top: 7px; }
  .thumb.cur { outline: 2px solid #d24726; border-color: #d24726; overflow: visible; }
  .ttitle { width: 115px; height: 8px; margin-left: 8px; background: #005b8c; border: 1px solid #111; color: #e8ff2a; font: 700 6.500px/8px "Noto Sans CJK SC", sans-serif; text-align: center; white-space: nowrap; }
  .ttitle small { font-size: 3px; }
  .ttitle.cover { margin: 23px 0 0 12px; width: 107px; height: 12px; font-size: 8px; line-height: 12px; box-shadow: 0 0 0 1px #888; }
  .t2a { color: #7f0000; font: 700 6px/8px "Noto Sans CJK SC", sans-serif; margin: 9px 0 0 8px; white-space: nowrap; }
  .t2b { color: #7f0000; font: 700 4.700px/7px "Noto Sans CJK SC", sans-serif; margin: 12px 0 0 3px; white-space: nowrap; }
  .t2b span { margin-left: 10px; }
  .tl { height: 2px; background: repeating-linear-gradient(90deg, #222 0 3px, #6a6a6a 3px 4px); filter: blur(.5px); }
  .tfoot { position: absolute; left: 6px; bottom: 6px; display: flex; flex-direction: column; gap: 2px; }
  .tfoot i { width: 7px; height: 1px; background: #777; display: block; }

  .vscroll { width: 15px; display: flex; flex-direction: column; align-items: stretch; box-sizing: border-box; flex: none; }
  .vscroll.left { background: #565656; padding-top: 3px; }
  .sb { height: 13px; background: #8b8b8b; border: 1px solid #3f3f3f; box-sizing: border-box; display: flex; align-items: center; justify-content: center; flex: none; }
  .sb .up { border: 4px solid transparent; border-bottom: 4px solid #2b2b2b; border-top: 0; }
  .sb .dn { border: 4px solid transparent; border-top: 4px solid #2b2b2b; border-bottom: 0; }
  .thumbbar { height: 130px; background: #9a9a9a; border: 1px solid #3f3f3f; box-sizing: border-box; margin-top: 2px; flex: none; }
  .sb.bottom { margin-top: auto; margin-bottom: 1px; }
  .sliver { width: 4px; background: #5f5f5f; flex: none; }

  .edit { flex: 1; min-width: 0; position: relative; display: grid; grid-template-columns: 143px 820px; grid-template-rows: 40px 616px; border-left: 1px solid #8c8c8c; border-bottom: 1px solid #8c8c8c; margin-bottom: 2px; box-sizing: border-box; align-content: start; }
  .hruler { grid-column: 2; grid-row: 1; margin: 5px 0 0 2px; background: #777; outline: 1px solid #4a4a4a; }
  .vruler { grid-column: 1; grid-row: 2; margin: 1px 0 0 6px; background: #777; outline: 1px solid #4a4a4a; }
  .tk { stroke: #d9d9d9; }
  .rn { font: 400 13px "Liberation Sans Narrow", "Liberation Sans", sans-serif; fill: #f0f0f0; stroke: none; text-anchor: middle; }

  .slide { grid-column: 2; grid-row: 2; background: #fff; color: #7f0000; display: flex; flex-direction: column; box-sizing: border-box; padding-top: 42px; font-family: "Noto Sans CJK SC", sans-serif; box-shadow: 0 0 0 1px #8c8c8c; }
  .slide b { font-family: "Liberation Sans", sans-serif; font-weight: 700; }
  .stitle { flex: none; margin-left: 41px; width: 739px; height: 51px; box-sizing: border-box; border: 1px solid #000; background: #005b8c; color: #ffff00; font-size: 36px; line-height: 47px; text-align: center; box-shadow: 7px 7px 0 #000; white-space: nowrap; }
  .sgap { display: inline-block; width: 19px; }
  .sgap2 { display: inline-block; width: 17px; }
  .sp83 { font-size: 20px; }
  .sp83 b { font-size: 22px; }
  .q { margin: 61px 0 0 38px; font-size: 36px; letter-spacing: .4px; white-space: nowrap; flex: none; }
  .q div { height: 44px; line-height: 44px; }
  .a { margin: 88px 0 0 16px; font-size: 32px; white-space: nowrap; flex: none; }
  .a div { height: 40px; line-height: 40px; }
  .a .a2 { margin-left: 67px; }
  .chapter { margin: auto 0 17px 1px; width: 102px; text-align: center; color: #000; font: 700 14px/17px "Liberation Sans", sans-serif; flex: none; }

  .gh { position: absolute; left: 29px; width: 1047px; top: 349px; border-top: 1px dashed #9c9c9c; }
  .gv { position: absolute; left: 553px; top: 26px; height: 640px; border-left: 1px dashed #8a8a8a; }

  .vscroll.right { background: #676767; border-right: 1px solid #3f3f3f; width: 16px; margin-right: 8px; padding-top: 3px; }
  .trackgap { height: 22px; background: #565656; flex: none; }
  .trackfill { height: 544px; background: #565656; flex: none; }
  .thumbbar.small { height: 21px; margin-top: 0; background: #9a9a9a; }
  .pager { display: flex; flex-direction: column; align-items: center; gap: 8px; margin-top: 5px; color: #2b2b2b; }
  .pager path { fill: #2b2b2b; stroke: none; }
  .pager path + path { stroke: #2b2b2b; stroke-width: 1; }

  /* panel */
  .panel { width: 292px; flex: none; display: flex; flex-direction: column; background: #676767; }
  .phead { height: 41px; display: flex; align-items: center; color: #f4f4f4; padding-left: 6px; box-sizing: border-box; position: relative; }
  .phead span { font-size: 21px; margin-top: 10px; }
  .ptri { position: absolute; left: 222px; top: 21px; border: 4px solid transparent; border-top: 5px solid #f0f0f0; border-bottom: 0; }
  .px { position: absolute; left: 263px; top: 18px; stroke-width: 2; color: #f4f4f4; }
  .pbody { width: 284px; height: 628px; background: #fff; padding: 18px 0 0 13px; box-sizing: border-box; }
  h4 { margin: 0 0 0 3px; font-weight: 400; font-size: 12px; line-height: 16px; color: #000; white-space: nowrap; }
  .psec { display: flex; margin-bottom: 9px; height: 91px; }
  .psec:first-child { height: 89px; }
  .psec:first-child .pgrid { margin-top: 1px; }
  .psec:nth-child(4) { margin-bottom: 0; height: 76px; }
  .pcol.c1 { width: 98px; flex: none; }
  .pgrid { margin-top: 3px; }
  .prow { display: flex; height: 24px; }
  .pcell { width: 30px; display: flex; align-items: center; justify-content: center; }
  .pi .ff { fill: #f1cbcb; stroke: none; }
  .pi .ss { stroke: #f1cbcb; }
  .pi .dd { stroke: #f1cbcb; stroke-dasharray: 2 1.500; }
  .pi.soft .ss { stroke: #f6e0e0; }
  .pi .rf { fill: #c84444; stroke: none; }
  .pi .rs { stroke: #c84444; }
  .opts { display: grid; grid-template-columns: 92px 1fr; margin: 2px 0 0 3px; grid-auto-rows: 32px; }
  .opt { display: flex; align-items: center; gap: 5px; color: #c4c4c4; font-size: 12px; }
  .radio { width: 17px; height: 17px; border-radius: 50%; border: 2px solid #cfcfcf; background: #f2f2f2; box-sizing: border-box; display: flex; align-items: center; justify-content: center; flex: none; }
  .radio.sel::after { content: ""; width: 9px; height: 9px; border-radius: 50%; background: #ababab; }
  .check { width: 18px; height: 18px; border: 2px solid #cfcfcf; background: #f2f2f2; box-sizing: border-box; flex: none; }
  .mg { margin-top: 10px; }
  .margins { display: grid; grid-template-columns: 95px 95px; grid-auto-rows: 32px; margin-top: 5px; }
  .marg-item { display: flex; align-items: flex-start; gap: 1px; height: 26px; }
  .marg-ic { color: #222; margin-top: 6px; flex: none; }
  .spin { width: 72px; height: 26px; border: 1px solid #cfcfcf; box-sizing: border-box; display: flex; flex-direction: column; align-items: flex-end; justify-content: center; gap: 6px; padding-right: 5px; }
  .sup { border: 3px solid transparent; border-bottom: 4px solid #d0d0d0; border-top: 0; }
  .sdn { border: 3px solid transparent; border-top: 4px solid #d0d0d0; border-bottom: 0; }
  .actions { display: grid; grid-template-columns: 95px 95px; color: #f2cccc; font-size: 12px; text-align: center; padding-left: 4px; margin-top: 2px; line-height: 16px; }

  /* status */
  .status { height: 20px; background: #bfbbb7; display: flex; align-items: center; flex: none; color: #333; font-size: 12px; white-space: nowrap; }
  .st1 { margin-left: 8px; letter-spacing: .400px; width: 148px; color: #444; }
  .stn { color: #f4f4f4; margin-left: 8px; }
  .st2 { margin-left: 16px; width: 60px; }
  .stnote { margin-left: auto; color: #f4f4f4; }
  .st3 { margin-left: 2px; margin-right: 19px; font-size: 13px; color: #222; }
  .vb { width: 38px; height: 20px; display: flex; align-items: center; justify-content: center; flex: none; }
  .vb.act { background: #a09c98; }
  .lv { color: #f4f4f4; }
  .zoom { display: flex; align-items: center; }
  .zm { width: 7px; height: 2px; background: #f4f4f4; margin-left: 5px; }
  .slider { width: 100px; height: 1px; background: #777; margin-left: 3px; position: relative; }
  .sthumb { position: absolute; left: 40px; top: -5px; width: 5px; height: 11px; background: #6e6c6a; }
  .smid { position: absolute; left: 49px; top: -3px; width: 1px; height: 7px; background: #777; }
  .zp { width: 9px; height: 9px; margin-left: 3px; background: linear-gradient(#f4f4f4, #f4f4f4) center/9px 2px no-repeat, linear-gradient(#f4f4f4, #f4f4f4) center/2px 9px no-repeat; }
  .zv { margin-left: 9px; width: 37px; font-size: 13px; color: #2a2a2a; }
  .fit { color: #f4f4f4; margin-right: 8px; }
</style>
